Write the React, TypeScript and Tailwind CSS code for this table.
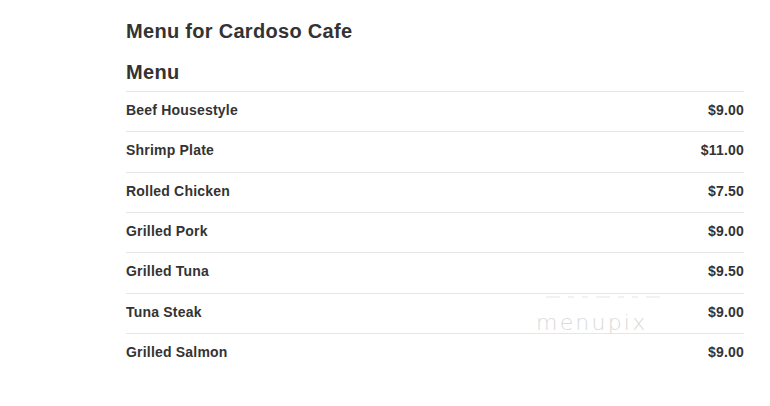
import React from "react";

const items: [string, string][] = [
  ["Beef Housestyle", "$9.00"],
  ["Shrimp Plate", "$11.00"],
  ["Rolled Chicken", "$7.50"],
  ["Grilled Pork", "$9.00"],
  ["Grilled Tuna", "$9.50"],
  ["Tuna Steak", "$9.00"],
  ["Grilled Salmon", "$9.00"],
];

export default function App() {
  return (
    <div
      className="relative w-[770px] h-[406px] bg-white text-[#333]"
      style={{ fontFamily: '"Liberation Sans", Arial, sans-serif' }}
    >
      <div className="ml-[126px] w-[618px] pt-[17px]">
        <h1 className="text-[20px] leading-[28px] font-bold tracking-[0.3px]">Menu for Cardoso Cafe</h1>
        <h2 className="mt-[13px] text-[20px] leading-[28px] font-bold tracking-[0.3px]">Menu</h2>
        <div className="mt-[5px]">
          {items.map(([name, price]) => (
            <div
              key={name}
              className="flex justify-between border-t border-[#e6e6e6] pt-[8px] pb-[11.33px] text-[14px] leading-[20px] font-bold tracking-[0.2px]"
            >
              <span>{name}</span>
              <span>{price}</span>
            </div>
          ))}
        </div>
      </div>
      <div className="absolute left-[546px] top-[296px] flex gap-[8px]">
        <span className="w-[14px] h-[2px] bg-[#f2f2f2]" />
        <span className="w-[6px] h-[2px] bg-[#f2f2f2]" />
        <span className="w-[6px] h-[2px] bg-[#f2f2f2]" />
        <span className="w-[14px] h-[2px] bg-[#f2f2f2]" />
        <span className="w-[6px] h-[2px] bg-[#f2f2f2]" />
        <span className="w-[6px] h-[2px] bg-[#f2f2f2]" />
        <span className="w-[14px] h-[2px] bg-[#f2f2f2]" />
      </div>
      <div
        className="absolute left-[536px] top-[310px] text-[22px] leading-[26px] text-[#dadada] tracking-[2.2px]"
        style={{ fontFamily: '"DejaVu Sans", sans-serif', fontWeight: 200 }}
      >
        menupix
      </div>
    </div>
  );
}
